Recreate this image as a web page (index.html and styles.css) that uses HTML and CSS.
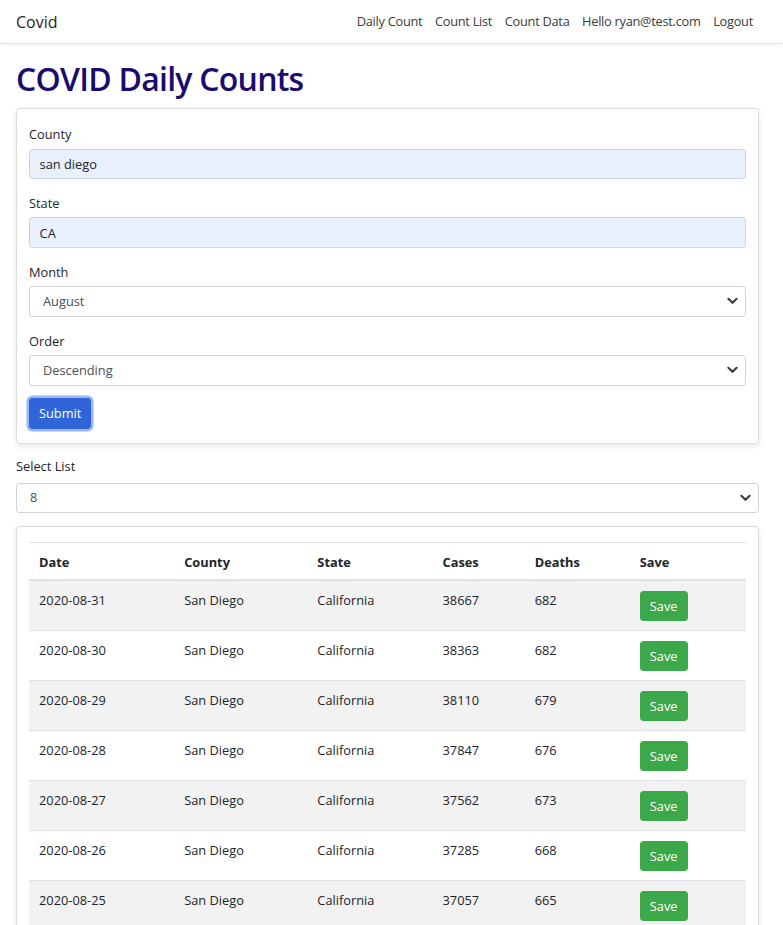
FILE: index.html
```html
<!DOCTYPE html>
<html lang="en">
<head>
<meta charset="utf-8">
<title>Covid</title>
<link rel="stylesheet" href="styles.css">
</head>
<body>
<header class="navbar">
  <div class="navbar-inner">
    <a class="brand">Covid</a>
    <nav class="nav">
      <a class="nav-link">Daily Count</a>
      <a class="nav-link">Count List</a>
      <a class="nav-link">Count Data</a>
      <a class="nav-link">Hello ryan@test.com</a>
      <a class="nav-link">Logout</a>
    </nav>
  </div>
</header>
<main class="container">
  <h1 class="title">COVID Daily Counts</h1>
  <section class="card form-card">
    <div class="form-group">
      <label class="label">County</label>
      <input class="input autofill" type="text" value="san diego">
    </div>
    <div class="form-group">
      <label class="label">State</label>
      <input class="input autofill" type="text" value="CA">
    </div>
    <div class="form-group">
      <label class="label">Month</label>
      <div class="select-wrap">
        <select class="select"><option>August</option></select>
        <svg class="chevron" viewBox="0 0 12 8" width="11" height="8"><path d="M1.5 1.5 L6 6 L10.5 1.5" fill="none" stroke="#343a40" stroke-width="2.2" stroke-linecap="round" stroke-linejoin="round"/></svg>
      </div>
    </div>
    <div class="form-group last">
      <label class="label">Order</label>
      <div class="select-wrap">
        <select class="select"><option>Descending</option></select>
        <svg class="chevron" viewBox="0 0 12 8" width="11" height="8"><path d="M1.5 1.5 L6 6 L10.5 1.5" fill="none" stroke="#343a40" stroke-width="2.2" stroke-linecap="round" stroke-linejoin="round"/></svg>
      </div>
    </div>
    <button class="btn btn-primary" type="button">Submit</button>
  </section>

  <div class="list-group">
    <label class="label">Select List</label>
    <div class="select-wrap">
      <select class="select select-list"><option>8</option></select>
      <svg class="chevron" viewBox="0 0 12 8" width="11" height="8"><path d="M1.5 1.5 L6 6 L10.5 1.5" fill="none" stroke="#343a40" stroke-width="2.2" stroke-linecap="round" stroke-linejoin="round"/></svg>
    </div>
  </div>

  <section class="card table-card">
    <table class="table">
      <colgroup>
        <col class="c-date"><col class="c-county"><col class="c-state"><col class="c-cases"><col class="c-deaths"><col class="c-save">
      </colgroup>
      <thead>
        <tr><th>Date</th><th>County</th><th>State</th><th>Cases</th><th>Deaths</th><th>Save</th></tr>
      </thead>
      <tbody>
        <tr><td>2020-08-31</td><td>San Diego</td><td>California</td><td>38667</td><td>682</td><td><button class="btn btn-save" type="button">Save</button></td></tr>
        <tr><td>2020-08-30</td><td>San Diego</td><td>California</td><td>38363</td><td>682</td><td><button class="btn btn-save" type="button">Save</button></td></tr>
        <tr><td>2020-08-29</td><td>San Diego</td><td>California</td><td>38110</td><td>679</td><td><button class="btn btn-save" type="button">Save</button></td></tr>
        <tr><td>2020-08-28</td><td>San Diego</td><td>California</td><td>37847</td><td>676</td><td><button class="btn btn-save" type="button">Save</button></td></tr>
        <tr><td>2020-08-27</td><td>San Diego</td><td>California</td><td>37562</td><td>673</td><td><button class="btn btn-save" type="button">Save</button></td></tr>
        <tr><td>2020-08-26</td><td>San Diego</td><td>California</td><td>37285</td><td>668</td><td><button class="btn btn-save" type="button">Save</button></td></tr>
        <tr><td>2020-08-25</td><td>San Diego</td><td>California</td><td>37057</td><td>665</td><td><button class="btn btn-save" type="button">Save</button></td></tr>
      </tbody>
    </table>
  </section>
</main>
</body>
</html>
```
FILE: styles.css
```css
* { box-sizing: border-box; }
html, body { margin: 0; padding: 0; }
body {
  font-family: "Open Sans", "Noto Sans", "Liberation Sans", sans-serif;
  font-size: 12.8px;
  line-height: 1.5;
  color: #212529;
  background: #fff;
  width: 783px;
  overflow: hidden;
}

.navbar {
  height: 44px;
  border-bottom: 1px solid #e3e3e6;
  box-shadow: 0 1px 5px rgba(0,0,0,0.06);
  background: #fff;
}
.navbar-inner {
  width: 759px;
  height: 43px;
  padding: 0 0 0 16px;
  display: flex;
  align-items: center;
  justify-content: space-between;
}
.brand {
  font-size: 16px;
  color: #1f1f1f;
  line-height: 1.5;
}
.nav { display: flex; }
.nav-link {
  color: #3b3b3b;
  padding: 0 6.3px;
  font-size: 12.8px;
  letter-spacing: -0.27px;
}
.nav-link:last-child { padding-right: 6px; }

.container {
  margin-left: 16px;
  width: 743px;
}

.title {
  margin: 16px 0 10px;
  font-size: 32px;
  font-weight: 600;
  line-height: 1.2;
  color: #1a0b6e;
  letter-spacing: -0.75px;
}

.card {
  background: #fff;
  border: 1px solid #dcdcdf;
  border-radius: 4px;
  box-shadow: 0 2px 6px rgba(0,0,0,0.1);
}
.form-card {
  padding: 16px 12px 14px;
  margin-bottom: 13px;
}
.form-group { margin-bottom: 15.3px; }
.form-group.last { margin-bottom: 12.5px; }
.label {
  display: block;
  margin-bottom: 4px;
  color: #212529;
}
.input, .select {
  display: block;
  width: 100%;
  height: 30.4px;
  font-family: inherit;
  font-size: 12.8px;
  line-height: 1.5;
  border: 1px solid #ced4da;
  border-radius: 3.2px;
  padding: 0 9.6px;
  color: #212529;
  background: #fff;
  outline: none;
}
.autofill { background: #e8f0fe; }
.select {
  -webkit-appearance: none;
  appearance: none;
  padding-left: 13px;
  color: #495057;
}
.select-list { padding-left: 13px; }
.select-wrap { position: relative; }
.chevron {
  position: absolute;
  right: 8px;
  top: 11px;
  pointer-events: none;
}

.btn {
  font-family: inherit;
  font-size: 12.8px;
  line-height: 1.5;
  border: 1px solid transparent;
  border-radius: 3.2px;
  color: #fff;
  cursor: pointer;
}
.btn-primary {
  background: #2f65d9;
  border-color: #2f65d9;
  height: 31px;
  padding: 0 9px;
  box-shadow: 0 0 0 2.5px rgba(120,160,245,0.75);
}
.btn-save {
  background: #3ba84a;
  border-color: #3ba84a;
  height: 30px;
  padding: 2px 9px 0;
  vertical-align: top;
}

.list-group { margin-bottom: 13px; }
.list-group .label { margin-bottom: 6.5px; }

.table-card {
  padding: 15px 12px 16px;
}
.table {
  width: 100%;
  border-collapse: collapse;
  table-layout: fixed;
}
.c-date { width: 145px; }
.c-county { width: 133px; }
.c-state { width: 125px; }
.c-cases { width: 92px; }
.c-deaths { width: 105px; }
.c-save { width: 116px; }
.table th {
  text-align: left;
  font-weight: 700;
  padding: 10px 10px 7px;
  border-top: 1px solid #dee2e6;
  border-bottom: 2px solid #dee2e6;
  vertical-align: bottom;
}
.table td {
  padding: 9.5px 10px;
  border-top: 1px solid #dee2e6;
  vertical-align: top;
  line-height: 19px;
}
.table thead + tbody tr:first-child td { border-top: none; }
.table tbody tr:nth-child(odd) { background: #f2f2f2; }
```
